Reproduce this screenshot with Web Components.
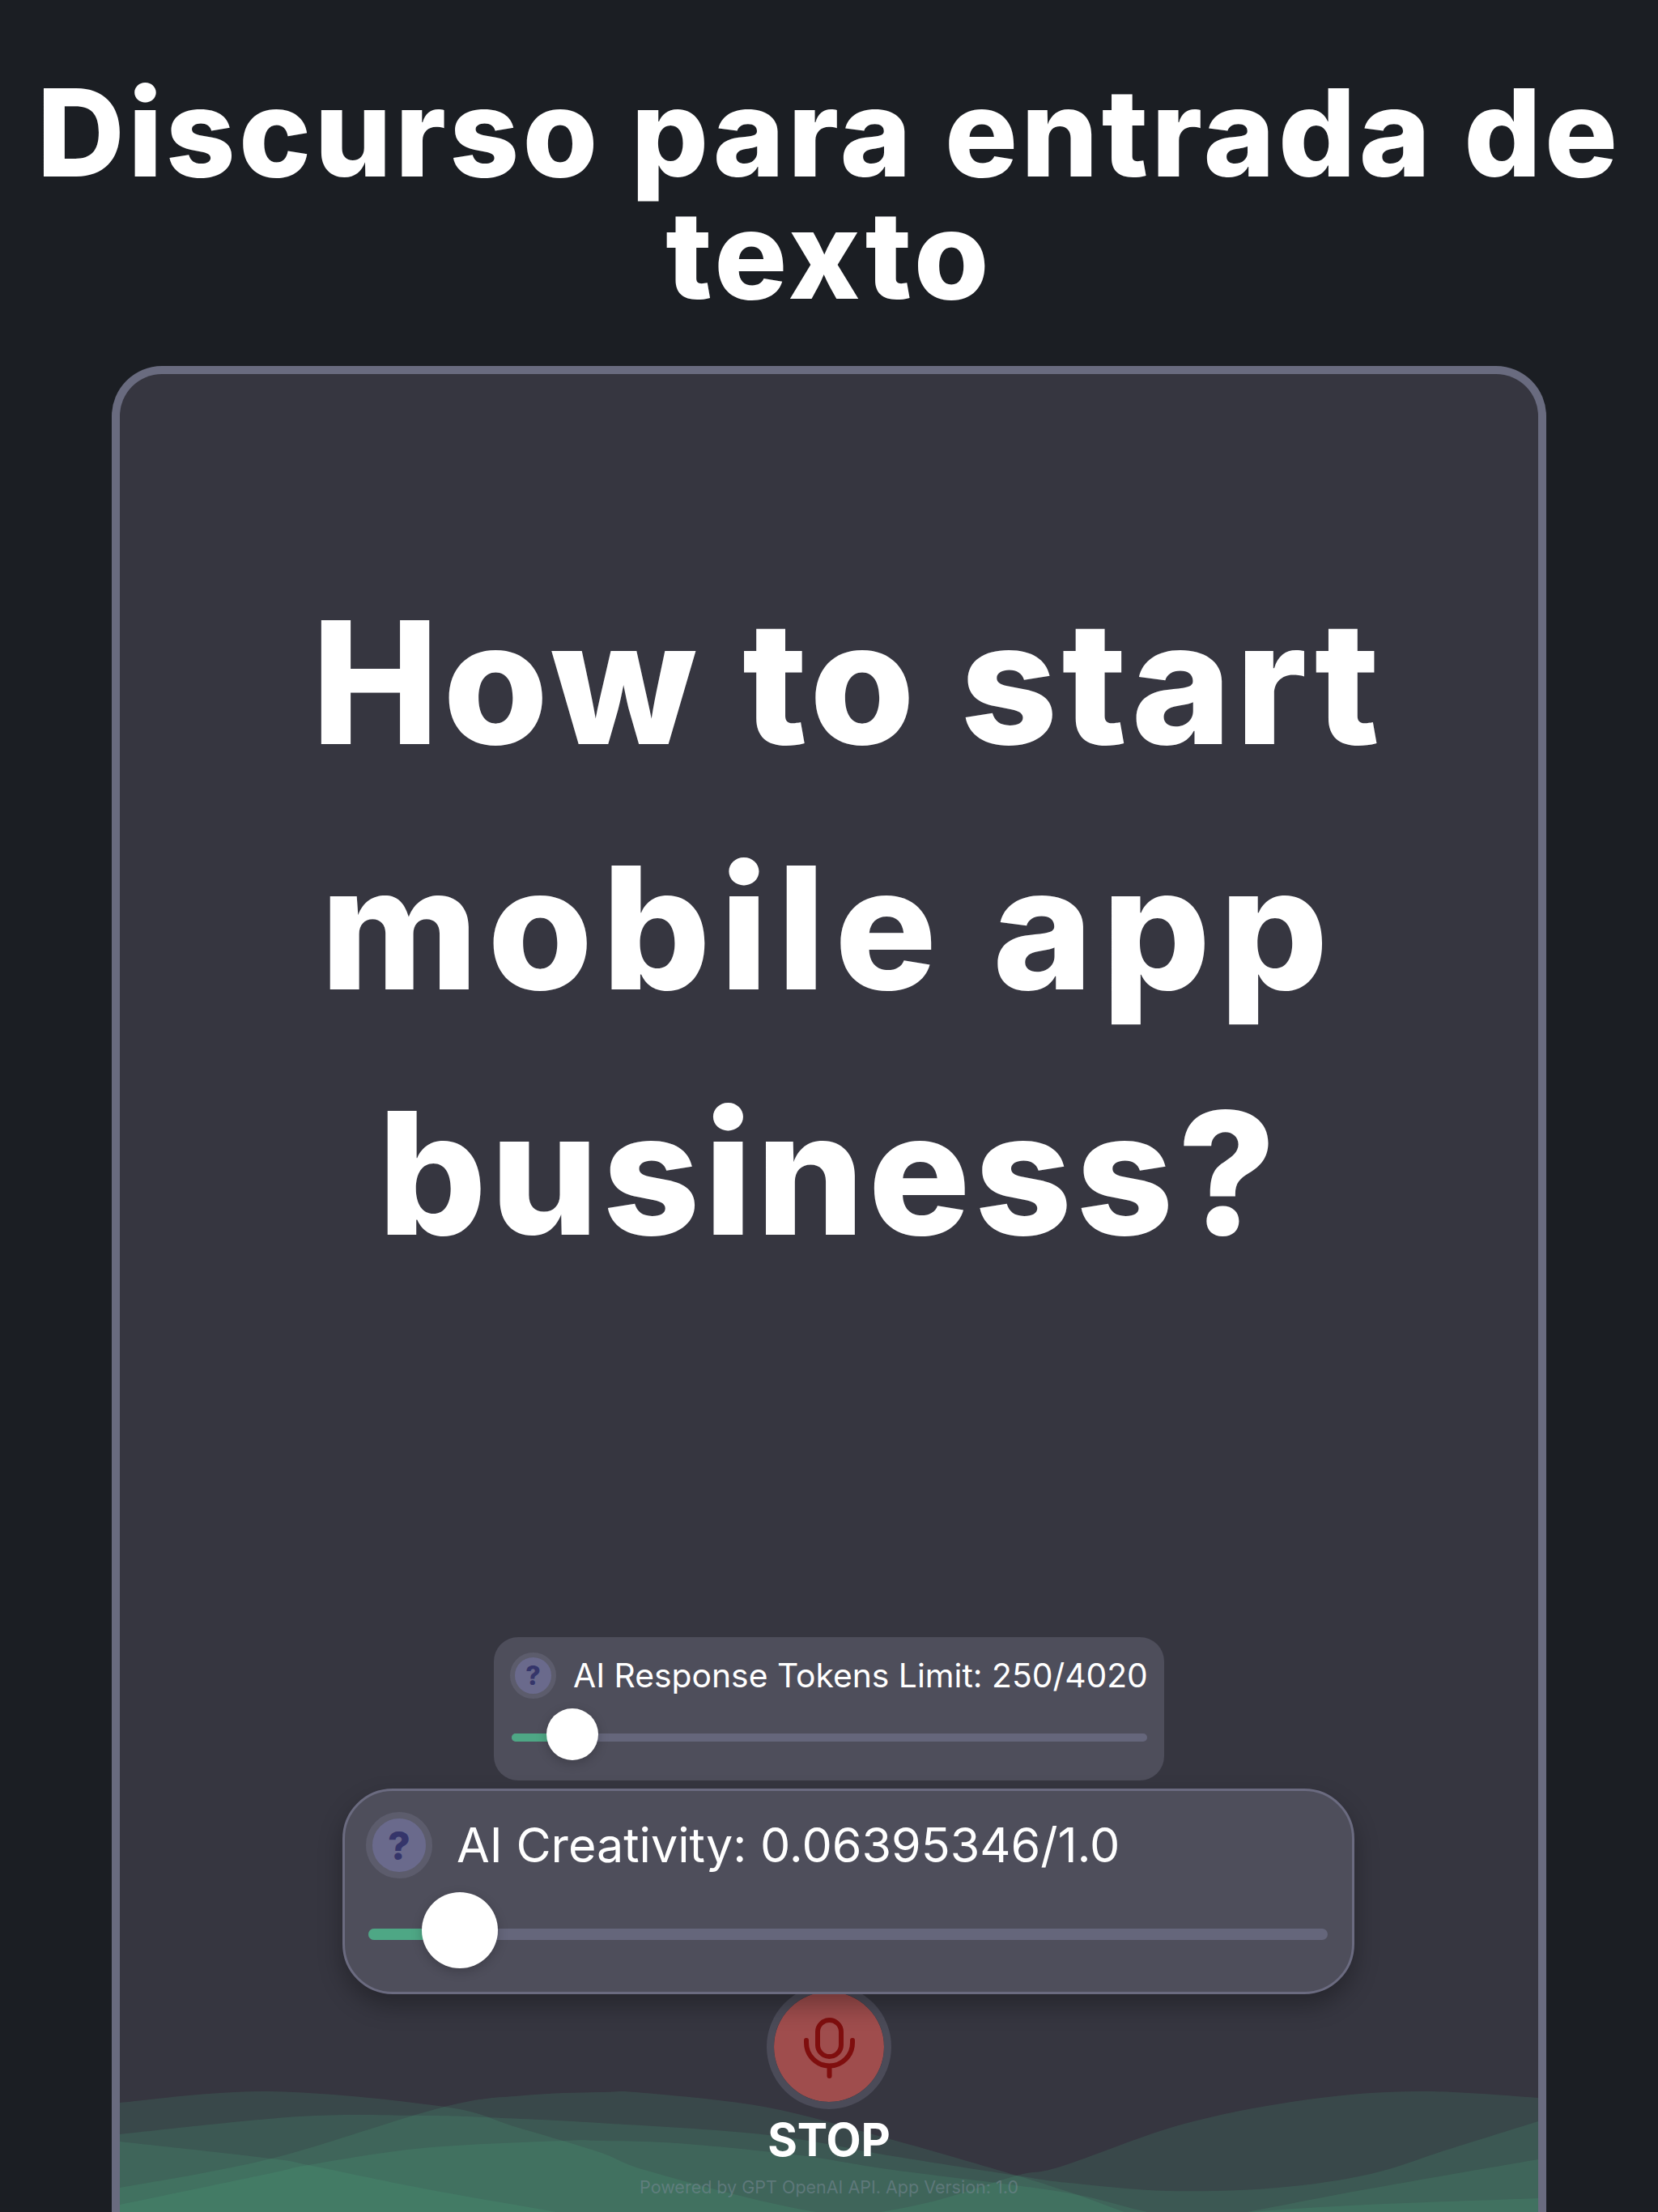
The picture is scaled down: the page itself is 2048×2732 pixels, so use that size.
<!DOCTYPE html>
<html lang="pt">
<head>
<meta charset="utf-8">
<title>Discurso para entrada de texto</title>
<style>
  html, body { margin: 0; padding: 0; background: #1b1e23; }
  body { font-family: Inter, "Liberation Sans", sans-serif; color: #fff; }
</style>
</head>
<body>
<speech-app>
  <app-title slot="title">Discurso para entrada de texto</app-title>
  <speech-card>
    <prompt-text><span class="lead">How to start</span><br><span class="wide">mobile app</span><br>business?</prompt-text>
    <slider-panel variant="small" fill="75" thumb="75">AI Response Tokens Limit: 250/4020</slider-panel>
    <slider-panel variant="large" fill="113" thumb="113">AI Creativity: 0.06395346/1.0</slider-panel>
    <record-button>STOP</record-button>
    <app-footer>Powered by GPT OpenAI API. App Version: 1.0</app-footer>
  </speech-card>
</speech-app>

<script>
class SpeechApp extends HTMLElement {
  constructor() {
    super();
    this.attachShadow({mode: 'open'}).innerHTML = `
      <style>
        :host { display: flex; flex-direction: column; height: 2732px; overflow: hidden; background: #1b1e23; }
      </style>
      <slot name="title"></slot>
      <slot></slot>`;
  }
}

class AppTitle extends HTMLElement {
  constructor() {
    super();
    this.attachShadow({mode: 'open'}).innerHTML = `
      <style>
        :host {
          display: block;
          box-sizing: border-box;
          height: 452px;
          padding: 88px 20px 0;
          text-align: center;
          font-size: 150px;
          font-weight: 800;
          line-height: 151px;
          letter-spacing: 4.200px;
        }
      </style>
      <slot></slot>`;
  }
}

class SpeechCard extends HTMLElement {
  constructor() {
    super();
    this.attachShadow({mode: 'open'}).innerHTML = `
      <style>
        :host {
          display: flex;
          flex-direction: column;
          position: relative;
          box-sizing: border-box;
          flex: 1;
          margin: 0 138px;
          border: 10px solid #696b7f;
          border-bottom: 0;
          border-radius: 62px 62px 0 0;
          background: #363640;
          overflow: hidden;
        }
        svg { position: absolute; left: 0; bottom: 0; width: 1752px; height: 162px; }
        path { fill: rgba(78, 178, 134, .15); }
        .content { position: relative; display: flex; flex-direction: column; flex: 1; }
      </style>
      <svg viewBox="0 0 1752 162" aria-hidden="true"></svg>
      <div class="content"><slot></slot></div>`;
    this.drawWaves();
  }

  drawWaves() {
    const waves = [
      [[0,27],[183,13],[401,32],[489,57],[592,88],[648,110],[800,150],[900,165],[1000,150],[1108,117],[1162,106],[1315,53],[1468,23],[1606,13],[1752,21]],
      [[0,132],[187,96],[401,32],[500,18],[592,14],[648,15],[801,33],[955,73],[1108,117],[1172,137],[1300,178],[1392,162],[1545,133],[1752,97]],
      [[0,66],[222,44],[375,43],[451,45],[592,52],[801,67],[955,93],[1108,117],[1172,126],[1296,136],[1430,132],[1545,115],[1640,85],[1752,50]],
      [[0,75],[187,96],[233,104],[375,133],[528,160],[700,190],[1000,200],[1421,160],[1752,145]],
      [[0,153],[187,114],[233,104],[375,83],[547,74],[592,74],[687,77],[840,92],[955,110],[1162,137],[1269,162],[1400,190],[1752,200]]
    ];
    const svg = this.shadowRoot.querySelector('svg');
    waves.forEach(points => {
      const path = document.createElementNS('http://www.w3.org/2000/svg', 'path');
      path.setAttribute('d', this.smoothPath(points));
      svg.appendChild(path);
    });
  }

  // catmull-rom through the edge points, closed along the bottom
  smoothPath(p) {
    let d = `M${p[0][0]} ${p[0][1]}`;
    for (let i = 0; i < p.length - 1; i++) {
      const a = p[Math.max(i - 1, 0)], b = p[i], c = p[i + 1], e = p[Math.min(i + 2, p.length - 1)];
      const c1x = b[0] + (c[0] - a[0]) / 6, c1y = b[1] + (c[1] - a[1]) / 6;
      const c2x = c[0] - (e[0] - b[0]) / 6, c2y = c[1] - (e[1] - b[1]) / 6;
      d += `C${c1x} ${c1y} ${c2x} ${c2y} ${c[0]} ${c[1]}`;
    }
    return d + 'V240H0Z';
  }
}

class PromptText extends HTMLElement {
  constructor() {
    super();
    this.attachShadow({mode: 'open'}).innerHTML = `
      <style>
        :host {
          display: block;
          padding: 230px 0 0;
          margin-bottom: auto;
          text-align: center;
          font-size: 210px;
          font-weight: 800;
          line-height: 303px;
          letter-spacing: 5px;
        }
        ::slotted(.lead) { padding-left: 46px; }
        ::slotted(.wide) { letter-spacing: 11.500px; }
      </style>
      <slot></slot>`;
  }
}

const helpIcon = `<span class="help"><span>?</span></span>`;

class SliderPanel extends HTMLElement {
  constructor() {
    super();
    this.attachShadow({mode: 'open'}).innerHTML = `
      <style>
        :host {
          display: block;
          position: relative;
          z-index: 2;
          box-sizing: border-box;
          background: #4e4e5b;
        }
        :host([variant="small"]) {
          --help: 57px; --help-ring: 6px; --help-font: 32px; --gap: 21px;
          --track: 10px; --thumb: 64px; --thumb-rise: -4px; --label: 40.800px;
          width: 828px; height: 177px; margin: 0 auto 10px;
          padding: 19px 21px 0 20px;
          border-radius: 30px;
        }
        :host([variant="large"]) {
          --help: 82px; --help-ring: 8px; --help-font: 48px; --gap: 30px;
          --track: 14px; --thumb: 94px; --thumb-rise: -5px; --label: 59.200px;
          width: 1250px; height: 254px; margin-left: 275px;
          padding: 26px 30px 0 26px;
          border: 3px solid #6b6b80;
          border-radius: 62px;
          box-shadow: 0 14px 30px rgba(0, 0, 0, .3);
        }
        .head { display: flex; align-items: center; gap: var(--gap); }
        .help {
          flex: none;
          display: flex;
          align-items: center;
          justify-content: center;
          box-sizing: border-box;
          width: var(--help);
          height: var(--help);
          border: var(--help-ring) solid #5c5c6c;
          border-radius: 50%;
          background: #6a6a8c;
          color: #35356a;
          font-size: var(--help-font);
          font-weight: 800;
        }
        .label {
          font-size: var(--label);
          font-weight: 400;
          line-height: 1.2;
          white-space: nowrap;
        }
        .track {
          position: relative;
          height: var(--track);
          border-radius: calc(var(--track) / 2);
          background: #65667b;
        }
        :host([variant="small"]) .track { margin: 43px 0 0 2px; }
        :host([variant="large"]) .track { margin: 62px 0 0 3px; }
        .fill {
          height: 100%;
          border-radius: calc(var(--track) / 2) 0 0 calc(var(--track) / 2);
          background: #4ea785;
        }
        .thumb {
          position: absolute;
          top: calc((var(--track) - var(--thumb)) / 2 + var(--thumb-rise));
          width: var(--thumb);
          height: var(--thumb);
          margin-left: calc(var(--thumb) / -2);
          border-radius: 50%;
          background: #fff;
          box-shadow: 0 4px 14px rgba(0, 0, 0, .2);
        }
      </style>
      <div class="head">${helpIcon}<span class="label"><slot></slot></span></div>
      <div class="track"><div class="fill"></div><div class="thumb"></div></div>`;
  }

  connectedCallback() {
    const root = this.shadowRoot;
    root.querySelector('.fill').style.width = this.getAttribute('fill') + 'px';
    root.querySelector('.thumb').style.left = this.getAttribute('thumb') + 'px';
  }
}

class RecordButton extends HTMLElement {
  constructor() {
    super();
    this.attachShadow({mode: 'open'}).innerHTML = `
      <style>
        :host {
          display: flex;
          flex-direction: column;
          align-items: center;
          margin-top: -12px;
        }
        .mic {
          box-sizing: border-box;
          width: 154px;
          height: 154px;
          border: 9px solid #4b4b58;
          border-radius: 50%;
          background: #9f4d4d;
          background-clip: padding-box;
        }
        svg { display: block; margin: -9px; width: 154px; height: 154px; }
        .text {
          margin-top: 6px;
          font-size: 56px;
          font-weight: 700;
          line-height: 64px;
        }
      </style>
      <div class="mic">
        <svg viewBox="0 0 154 154" fill="none" stroke="#7f0e0e" stroke-width="6" stroke-linecap="round">
          <rect x="63" y="44" width="29" height="45" rx="14.5"/>
          <path d="M49 69v3a28.500 28.500 0 0 0 57 0v-3"/>
          <path d="M77.500 101V113"/>
        </svg>
      </div>
      <div class="text"><slot></slot></div>`;
  }
}

class AppFooter extends HTMLElement {
  constructor() {
    super();
    this.attachShadow({mode: 'open'}).innerHTML = `
      <style>
        :host {
          display: block;
          margin-top: 9px;
          padding-bottom: 14px;
          text-align: center;
          font-size: 21.500px;
          line-height: 34px;
          color: rgba(125, 140, 155, .5);
        }
      </style>
      <slot></slot>`;
  }
}

customElements.define('speech-app', SpeechApp);
customElements.define('app-title', AppTitle);
customElements.define('speech-card', SpeechCard);
customElements.define('prompt-text', PromptText);
customElements.define('slider-panel', SliderPanel);
customElements.define('record-button', RecordButton);
customElements.define('app-footer', AppFooter);
</script>
</body>
</html>
